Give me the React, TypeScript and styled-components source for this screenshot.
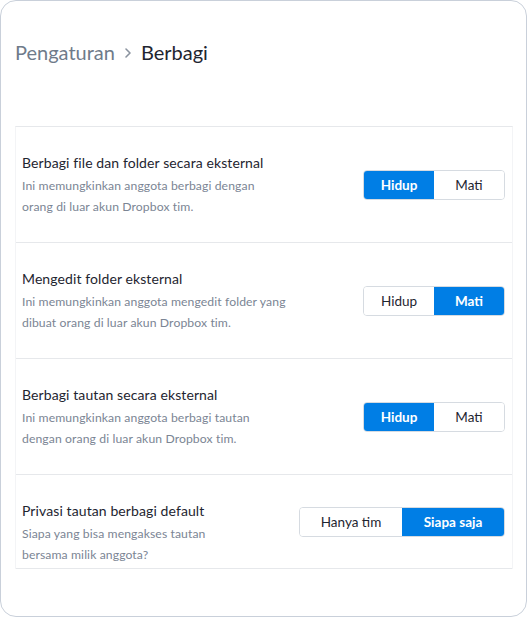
import React from "react";
import styled, { createGlobalStyle } from "styled-components";

const Global = createGlobalStyle`
  html, body { margin: 0; padding: 0; background: #ffffff; }
  body { font-family: Lato, "Noto Sans", sans-serif; -webkit-font-smoothing: antialiased; }
  * { box-sizing: border-box; }
`;

const Card = styled.div`
  width: 527px;
  height: 617px;
  border: 1px solid #c9d0da;
  border-radius: 16px;
  background: #fff;
  padding: 0 13px 0 14px;
  overflow: hidden;
`;

const Breadcrumb = styled.h1`
  margin: 0;
  height: 125px;
  padding-top: 38px;
  display: flex;
  align-items: flex-start;
  gap: 9px;
  font-size: 20px;
  font-weight: 400;
  line-height: 26px;
  color: #1e2530;
`;

const Crumb = styled.span`
  color: #6f7b8a;
`;

const Chevron = styled.svg`
  width: 8px;
  height: 12px;
  margin-top: 8px;
`;

const List = styled.div`
  border-top: 1px solid #e6e8eb;
  border-left: 1px solid #f3f4f6;
  border-right: 1px solid #f3f4f6;
`;

const Row = styled.div<{ $h: number }>`
  height: ${(p) => p.$h}px;
  border-bottom: 1px solid #e6e8eb;
  display: flex;
  align-items: center;
  justify-content: space-between;
  padding: 0 7px 0 6px;
`;

const Text = styled.div`
  align-self: flex-start;
  padding-top: 26px;
`;

const Title = styled.div`
  font-size: 14px;
  line-height: 20px;
  color: #1e2530;
  margin-bottom: 2px;
  letter-spacing: 0.1px;
`;

const Desc = styled.div`
  font-size: 12.2px;
  line-height: 21px;
  color: #7b8594;
  white-space: nowrap;
  letter-spacing: 0.1px;
`;

const Toggle = styled.div`
  display: flex;
  border: 1px solid #d6dbe1;
  border-radius: 4px;
  overflow: hidden;
  height: 30px;
`;

const Opt = styled.button<{ $on: boolean; $w: number }>`
  width: ${(p) => p.$w}px;
  border: none;
  margin: 0;
  padding: 0;
  font-family: inherit;
  font-size: 13.5px;
  font-weight: ${(p) => (p.$on ? 700 : 400)};
  background: ${(p) => (p.$on ? "#007ee5" : "#fff")};
  color: ${(p) => (p.$on ? "#fff" : "#1e2530")};
  cursor: pointer;
`;

type Item = {
  title: string;
  desc: string[];
  opts: [string, string];
  on: 0 | 1;
  w: number;
  h: number;
};

const items: Item[] = [
  {
    title: "Berbagi file dan folder secara eksternal",
    desc: ["Ini memungkinkan anggota berbagi dengan", "orang di luar akun Dropbox tim."],
    opts: ["Hidup", "Mati"],
    on: 0,
    w: 70,
    h: 116,
  },
  {
    title: "Mengedit folder eksternal",
    desc: ["Ini memungkinkan anggota mengedit folder yang", "dibuat orang di luar akun Dropbox tim."],
    opts: ["Hidup", "Mati"],
    on: 1,
    w: 70,
    h: 116,
  },
  {
    title: "Berbagi tautan secara eksternal",
    desc: ["Ini memungkinkan anggota berbagi tautan", "dengan orang di luar akun Dropbox tim."],
    opts: ["Hidup", "Mati"],
    on: 0,
    w: 70,
    h: 116,
  },
  {
    title: "Privasi tautan berbagi default",
    desc: ["Siapa yang bisa mengakses tautan", "bersama milik anggota?"],
    opts: ["Hanya tim", "Siapa saja"],
    on: 1,
    w: 102,
    h: 94,
  },
];

export default function App() {
  return (
    <>
      <Global />
      <Card>
        <Breadcrumb>
          <Crumb>Pengaturan</Crumb>
          <Chevron viewBox="0 0 8 12" aria-hidden>
            <path d="M2 2l4 4-4 4" fill="none" stroke="#8a939f" strokeWidth="1.6" strokeLinecap="round" strokeLinejoin="round" />
          </Chevron>
          <span>Berbagi</span>
        </Breadcrumb>
        <List>
          {items.map((it) => (
            <Row key={it.title} $h={it.h}>
              <Text>
                <Title>{it.title}</Title>
                <Desc>
                  {it.desc.map((d) => (
                    <div key={d}>{d}</div>
                  ))}
                </Desc>
              </Text>
              <Toggle>
                {it.opts.map((o, i) => (
                  <Opt key={o} $on={it.on === i} $w={it.w}>
                    {o}
                  </Opt>
                ))}
              </Toggle>
            </Row>
          ))}
        </List>
      </Card>
    </>
  );
}
